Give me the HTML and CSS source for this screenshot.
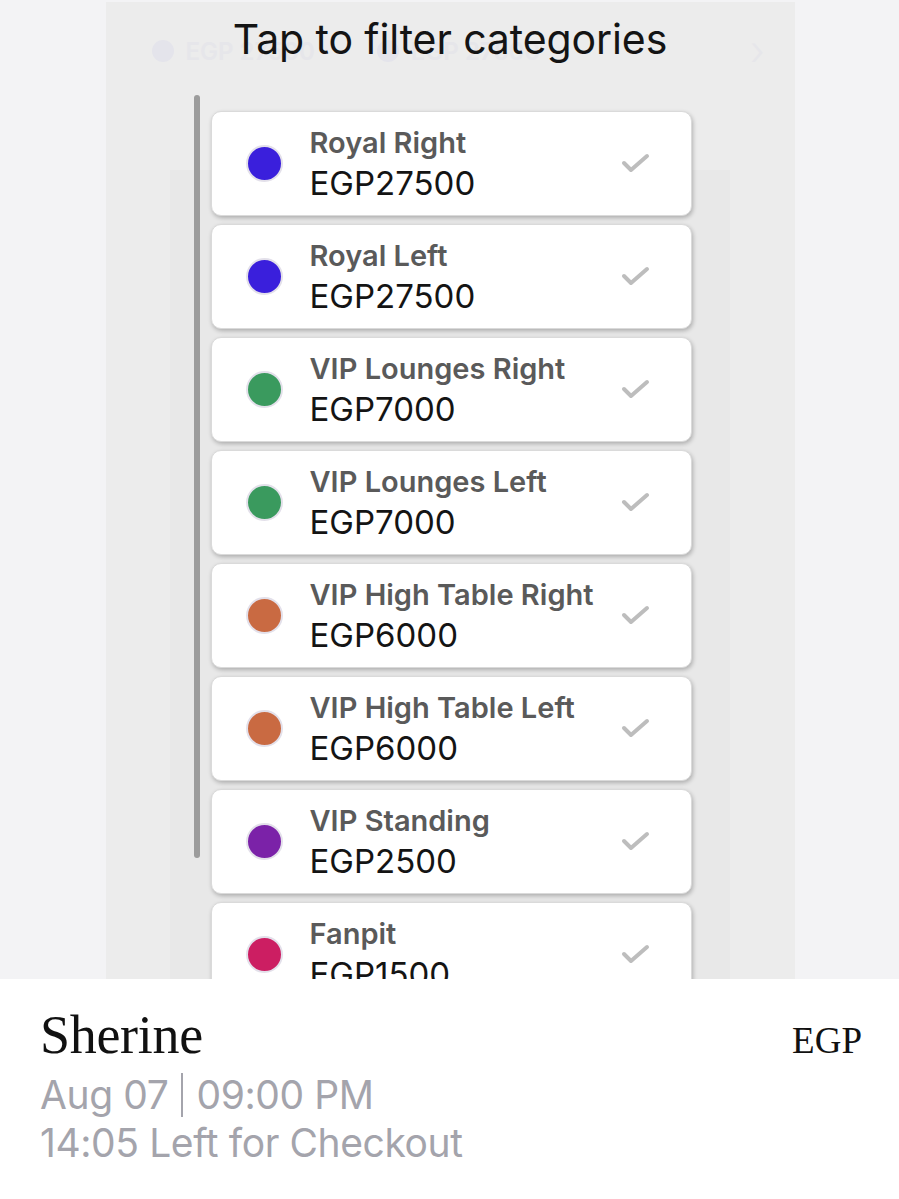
FILE: index.html
```html
<!DOCTYPE html>
<html lang="en">

<head>
    <meta http-equiv='Content-Type' content='text/html; charset=utf-8' />
    <meta name='viewport' content='width=device-width' />
    <title>Tap to filter categories</title>
    <link rel="stylesheet" href="styles.css">
</head>

<body>
    <div id="stage">
        <div class="sheet">
            <!-- faded chips row behind the title -->
            <div class="ghost">
                <span class="ghost-dot"></span><span class="ghost-txt">EGP 27500</span>
                <span class="ghost-dot second"></span><span class="ghost-txt">EGP 27500</span>
                <span class="ghost-chev">&#8250;</span>
            </div>
            <div class="backdrop"></div>
            <h4 class="title">Tap to filter categories</h4>
            <div class="picker">
                <div class="scrollbar"></div>
                <div class="list">
                    <div class="card">
                        <span class="dot royal"></span>
                        <div class="info"><div class="name">Royal Right</div><div class="price">EGP27500</div></div>
                        <svg class="check" width="30" height="22" viewBox="0 0 30 22"><polyline points="3,10 10,17 26,3" /></svg>
                    </div>
                    <div class="card">
                        <span class="dot royal"></span>
                        <div class="info"><div class="name">Royal Left</div><div class="price">EGP27500</div></div>
                        <svg class="check" width="30" height="22" viewBox="0 0 30 22"><polyline points="3,10 10,17 26,3" /></svg>
                    </div>
                    <div class="card">
                        <span class="dot lounge"></span>
                        <div class="info"><div class="name">VIP Lounges Right</div><div class="price">EGP7000</div></div>
                        <svg class="check" width="30" height="22" viewBox="0 0 30 22"><polyline points="3,10 10,17 26,3" /></svg>
                    </div>
                    <div class="card">
                        <span class="dot lounge"></span>
                        <div class="info"><div class="name">VIP Lounges Left</div><div class="price">EGP7000</div></div>
                        <svg class="check" width="30" height="22" viewBox="0 0 30 22"><polyline points="3,10 10,17 26,3" /></svg>
                    </div>
                    <div class="card">
                        <span class="dot hightable"></span>
                        <div class="info"><div class="name">VIP High Table Right</div><div class="price">EGP6000</div></div>
                        <svg class="check" width="30" height="22" viewBox="0 0 30 22"><polyline points="3,10 10,17 26,3" /></svg>
                    </div>
                    <div class="card">
                        <span class="dot hightable"></span>
                        <div class="info"><div class="name">VIP High Table Left</div><div class="price">EGP6000</div></div>
                        <svg class="check" width="30" height="22" viewBox="0 0 30 22"><polyline points="3,10 10,17 26,3" /></svg>
                    </div>
                    <div class="card">
                        <span class="dot standing"></span>
                        <div class="info"><div class="name">VIP Standing</div><div class="price">EGP2500</div></div>
                        <svg class="check" width="30" height="22" viewBox="0 0 30 22"><polyline points="3,10 10,17 26,3" /></svg>
                    </div>
                    <div class="card">
                        <span class="dot fanpit"></span>
                        <div class="info"><div class="name">Fanpit</div><div class="price">EGP1500</div></div>
                        <svg class="check" width="30" height="22" viewBox="0 0 30 22"><polyline points="3,10 10,17 26,3" /></svg>
                    </div>
                </div>
            </div>
        </div>
    </div>
    <div class="event">
        <div class="event-head">
            <span class="artist">Sherine</span>
            <span class="currency">EGP</span>
        </div>
        <div class="meta">Aug 07 <span class="sep"></span> 09:00 PM</div>
        <div class="meta">14:05 Left for Checkout</div>
    </div>
</body>

</html>
```

FILE: styles.css
```css
body {
    margin: 0;
    width: 899px;
    height: 1199px;
    overflow: hidden;
    background-color: #ffffff;
    font-family: Inter, "Noto Sans", sans-serif;
}

#stage {
    height: 979px;
    background-color: #f3f3f5;
    display: flex;
    justify-content: center;
    padding-top: 2px;
    box-sizing: border-box;
    overflow: hidden;
}

.sheet {
    position: relative;
    width: 689px;
    margin-left: 1px;
    background-color: #ececec;
    overflow: hidden;
}

.ghost {
    position: absolute;
    top: 34px;
    left: 46px;
    right: 30px;
    display: flex;
    align-items: center;
    gap: 12px;
    color: #e6e6ea;
    font-size: 24px;
    font-weight: 600;
}

.ghost-dot {
    width: 22px;
    height: 22px;
    border-radius: 50%;
    background-color: #e4e4eb;
}

.ghost-dot.second {
    margin-left: 50px;
}

.ghost-chev {
    margin-left: auto;
    font-size: 40px;
    font-weight: 300;
    line-height: 30px;
}

.backdrop {
    position: absolute;
    top: 168px;
    left: 64px;
    width: 560px;
    bottom: 0;
    background-color: #e8e8e8;
}

.title {
    position: relative;
    margin: 0;
    padding-top: 14px;
    text-align: center;
    font-size: 41px;
    font-weight: 400;
    line-height: 46px;
    color: #141414;
    letter-spacing: -0.1px;
}

.picker {
    position: relative;
    display: flex;
    margin-top: 33px;
    margin-left: 88px;
}

.scrollbar {
    width: 6px;
    height: 763px;
    border-radius: 3px;
    background-color: #9c9c9c;
    margin-right: 11px;
}

.list {
    display: flex;
    flex-direction: column;
    gap: 8px;
    margin-top: 16px;
}

.card {
    width: 481px;
    height: 105px;
    box-sizing: border-box;
    display: flex;
    align-items: center;
    padding: 0 40px 0 34px;
    background-color: #ffffff;
    border-radius: 10px;
    border: 1px solid #dadada;
    box-shadow: 1px 2px 4px rgba(0, 0, 0, 0.25);
}

.dot {
    box-sizing: border-box;
    width: 37px;
    height: 37px;
    border-radius: 50%;
    border: 2px solid #e3e0ea;
    flex-shrink: 0;
}

.royal { background-color: #3a1fdc; }
.lounge { background-color: #3a9a5e; }
.hightable { background-color: #c96a42; }
.standing { background-color: #7b22a8; }
.fanpit { background-color: #cc1e62; }

.info {
    flex: 1;
    margin-left: 27px;
    padding-top: 2px;
}

.name {
    font-size: 29px;
    font-weight: 600;
    line-height: 36px;
    color: #5a5a5a;
}

.price {
    font-size: 33px;
    font-weight: 400;
    line-height: 44px;
    color: #141414;
}

.check {
    flex-shrink: 0;
}

.check polyline {
    fill: none;
    stroke: #bdbdbd;
    stroke-width: 4;
    stroke-linecap: round;
    stroke-linejoin: round;
}

.event {
    padding: 29px 37px 0 40px;
}

.event-head {
    display: flex;
    justify-content: space-between;
    align-items: baseline;
    margin-bottom: 9px;
}

.artist {
    font-family: "Liberation Serif", serif;
    font-size: 54px;
    line-height: 54px;
    color: #111111;
    letter-spacing: -0.3px;
}

.currency {
    font-family: "Liberation Serif", serif;
    font-size: 37px;
    color: #111111;
}

.meta {
    font-size: 39px;
    line-height: 48px;
    color: #a4a4ac;
    letter-spacing: -0.4px;
}

.sep {
    display: inline-block;
    width: 2px;
    height: 44px;
    background-color: #a4a4ac;
    vertical-align: -8px;
    margin: 0 3px 0 2px;
}
```
